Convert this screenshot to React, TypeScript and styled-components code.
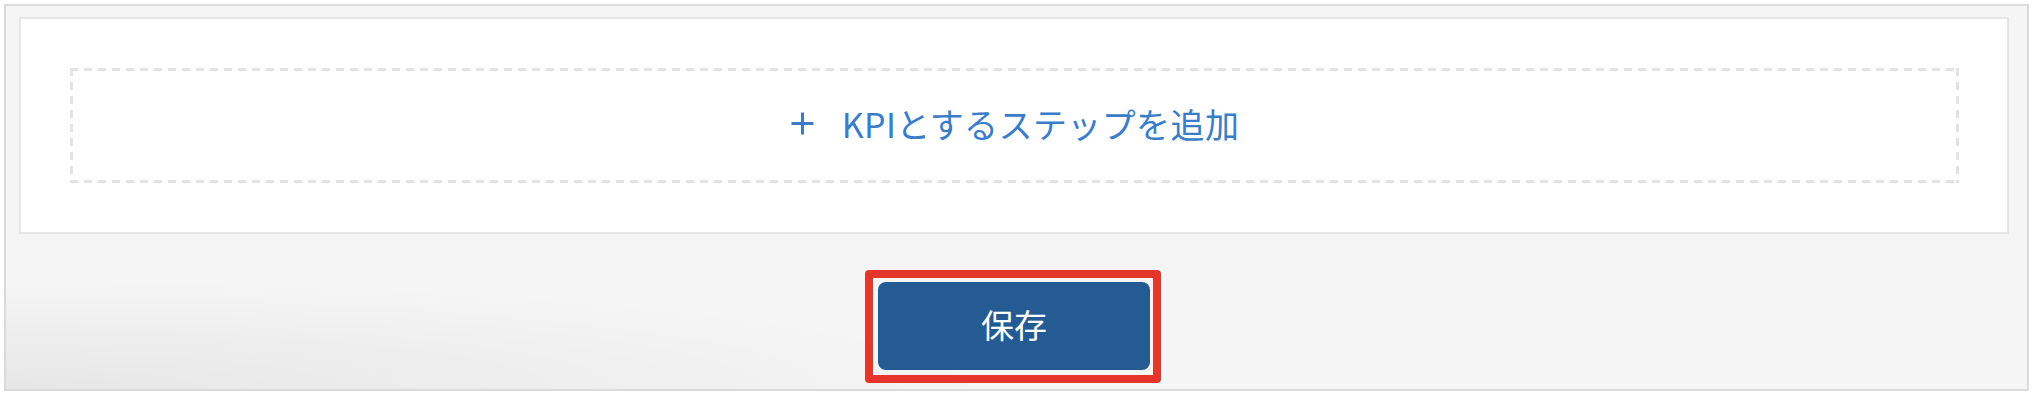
import React from "react";
import styled, { createGlobalStyle } from "styled-components";

const GlobalStyle = createGlobalStyle`
    body {
        margin: 0;
        background: #fff;
        font-family: "Noto Sans CJK JP", "Noto Sans", sans-serif;
    }
`;

const Frame = styled.div`
    box-sizing: border-box;
    width: 2025px;
    height: 387px;
    margin: 4px 0 0 4px;
    padding: 11px 18px 0 13px;
    border: 2px solid #dadada;
    background: radial-gradient(ellipse 1000px 110px at 0% 100%, rgba(0, 0, 0, 0.06), rgba(0, 0, 0, 0) 100%),
        #f5f5f5;
    display: flex;
    flex-direction: column;
    align-items: center;
`;

const Panel = styled.div`
    box-sizing: border-box;
    align-self: stretch;
    height: 217px;
    padding: 49px 48px 49px 49px;
    border: 2px solid #e6e6e6;
    background: #fff;
`;

const dashH = "repeating-linear-gradient(to right, #e3e3e3 0 8px, transparent 8px 14px)";
const dashV = "repeating-linear-gradient(to bottom, #e3e3e3 0 8px, transparent 8px 14px)";

const AddStep = styled.button`
    box-sizing: border-box;
    width: 100%;
    height: 100%;
    display: flex;
    align-items: center;
    justify-content: center;
    gap: 27px;
    border: none;
    background: ${dashH} left top / 100% 3px no-repeat, ${dashH} left bottom / 100% 3px no-repeat,
        ${dashV} left top / 3px 100% no-repeat, ${dashV} right top / 3px 100% no-repeat;
    color: #3b7cc8;
    font-family: "Noto Sans CJK JP", "Noto Sans", sans-serif;
    font-size: 34px;
    letter-spacing: 0.4px;
    cursor: pointer;
    padding: 0 0 4px;
`;

const PlusIcon = styled.svg`
    width: 25px;
    height: 25px;
    flex: none;
`;

const Highlight = styled.div`
    margin-top: 36px;
    margin-left: -2px;
    padding: 4px 3px 5px 5px;
    border: 8px solid #e6352a;
    border-radius: 4px;
`;

const SaveButton = styled.button`
    width: 272px;
    height: 88px;
    border: none;
    border-radius: 8px;
    background: #255b93;
    color: #fff;
    font-family: "Noto Sans CJK JP", "Noto Sans", sans-serif;
    font-size: 33px;
    padding: 0 0 4px;
    cursor: pointer;
`;

const App: React.FC = () => {
    return (
        <>
            <GlobalStyle />
            <Frame>
                <Panel>
                    <AddStep>
                        <PlusIcon viewBox="0 0 25 25">
                            <path d="M12.5 1.5v22M1.5 12.5h22" stroke="#3b7cc8" strokeWidth="3" fill="none" />
                        </PlusIcon>
                        <span>KPIとするステップを追加</span>
                    </AddStep>
                </Panel>
                <Highlight>
                    <SaveButton>保存</SaveButton>
                </Highlight>
            </Frame>
        </>
    );
};

export default App;
